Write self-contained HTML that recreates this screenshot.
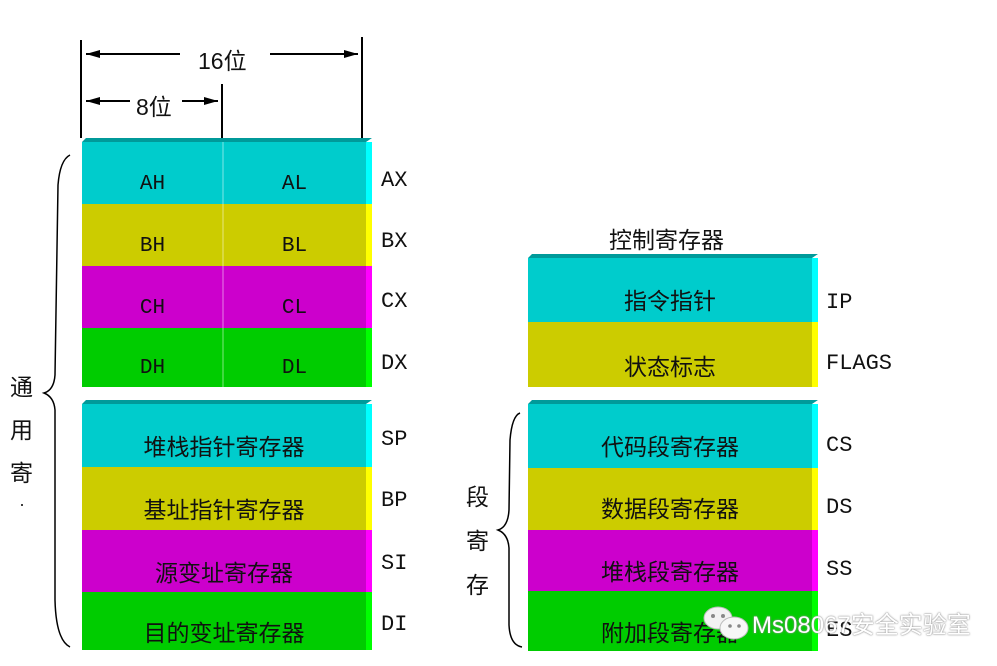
<!DOCTYPE html>
<html><head><meta charset="utf-8"><style>
body{margin:0;width:997px;height:665px;background:#fff;position:relative;overflow:hidden;font-family:"Liberation Sans","Noto Sans CJK SC",sans-serif}
.a{position:absolute}
.r{position:absolute;display:flex;align-items:center;justify-content:center;font-size:23px;color:#111}
.m{font-family:"Liberation Mono","Noto Sans CJK SC",monospace;font-size:21px}
.lab{position:absolute;font-family:"Liberation Mono",monospace;font-size:22px;color:#111}
.cn{position:absolute;font-size:23px;color:#111}
</style></head><body>
<svg class="a" style="left:0;top:0" width="997" height="665">
<g stroke="#000" stroke-width="2" fill="none">
<line x1="81" y1="40" x2="81" y2="138"/>
<line x1="362" y1="37" x2="362" y2="138"/>
<line x1="222" y1="84" x2="222" y2="140"/>
<line x1="86" y1="54" x2="180" y2="54"/><line x1="270" y1="54" x2="358" y2="54"/>
<line x1="86" y1="101" x2="130" y2="101"/><line x1="182" y1="101" x2="218" y2="101"/>
<path d="M70 155 Q60 160 58 185 L55 375 Q54 390 44 393 Q54 397 55 410 L55 600 Q56 640 70 647" stroke-width="1.5"/>
<path d="M520 413 Q512 416 510 440 L509 510 Q508 527 498 530 Q508 534 509 548 L509 625 Q510 645 522 647" stroke-width="1.5"/>
</g>
<g fill="#000"><polygon points="86,54 100,50 100,58"/><polygon points="358,54 344,50 344,58"/>
<polygon points="86,101 100,97 100,105"/><polygon points="218,101 204,97 204,105"/></g>
<polygon points="82,142 86,138 372,138 366,142" fill="#009a9a"/>
<rect x="82" y="142" width="284" height="62" fill="#00cccc"/><rect x="366" y="142" width="6" height="62" fill="#00ffff"/>
<rect x="82" y="204" width="284" height="62" fill="#cccc00"/><rect x="366" y="204" width="6" height="62" fill="#ffff00"/>
<rect x="82" y="266" width="284" height="62" fill="#cc00cc"/><rect x="366" y="266" width="6" height="62" fill="#ff00ff"/>
<rect x="82" y="328" width="284" height="59" fill="#00cc00"/><rect x="366" y="328" width="6" height="59" fill="#00ff00"/>
<line x1="223" y1="142" x2="223" y2="387" stroke="#ffffff" stroke-opacity=".5" stroke-width="1"/>
<polygon points="82,404 86,400 372,400 366,404" fill="#009a9a"/>
<rect x="82" y="404" width="284" height="63" fill="#00cccc"/><rect x="366" y="404" width="6" height="63" fill="#00ffff"/>
<rect x="82" y="467" width="284" height="63" fill="#cccc00"/><rect x="366" y="467" width="6" height="63" fill="#ffff00"/>
<rect x="82" y="530" width="284" height="62" fill="#cc00cc"/><rect x="366" y="530" width="6" height="62" fill="#ff00ff"/>
<rect x="82" y="592" width="284" height="58" fill="#00cc00"/><rect x="366" y="592" width="6" height="58" fill="#00ff00"/>
<polygon points="528,258 532,254 818,254 812,258" fill="#009a9a"/>
<rect x="528" y="258" width="284" height="64" fill="#00cccc"/><rect x="812" y="258" width="6" height="64" fill="#00ffff"/>
<rect x="528" y="322" width="284" height="65" fill="#cccc00"/><rect x="812" y="322" width="6" height="65" fill="#ffff00"/>
<polygon points="528,404 532,400 818,400 812,404" fill="#009a9a"/>
<rect x="528" y="404" width="284" height="64" fill="#00cccc"/><rect x="812" y="404" width="6" height="64" fill="#00ffff"/>
<rect x="528" y="468" width="284" height="62" fill="#cccc00"/><rect x="812" y="468" width="6" height="62" fill="#ffff00"/>
<rect x="528" y="530" width="284" height="61" fill="#cc00cc"/><rect x="812" y="530" width="6" height="61" fill="#ff00ff"/>
<rect x="528" y="591" width="284" height="60" fill="#00cc00"/><rect x="812" y="591" width="6" height="60" fill="#00ff00"/>
<circle cx="22" cy="505" r="1" fill="#000"/>
</svg>
<div class="cn" style="left:198px;top:42px;font-size:23px">16位</div>
<div class="cn" style="left:136px;top:88px;font-size:23px">8位</div>

<div class="r m" style="left:82px;top:142px;width:141px;height:84px">AH</div>
<div class="r m" style="left:223px;top:142px;width:143px;height:84px">AL</div>
<div class="r m" style="left:82px;top:204px;width:141px;height:84px">BH</div>
<div class="r m" style="left:223px;top:204px;width:143px;height:84px">BL</div>
<div class="r m" style="left:82px;top:266px;width:141px;height:84px">CH</div>
<div class="r m" style="left:223px;top:266px;width:143px;height:84px">CL</div>
<div class="r m" style="left:82px;top:328px;width:141px;height:80px">DH</div>
<div class="r m" style="left:223px;top:328px;width:143px;height:80px">DL</div>

<div class="r" style="left:82px;top:410px;width:284px;height:70px">堆栈指针寄存器</div>
<div class="r" style="left:82px;top:473px;width:284px;height:70px">基址指针寄存器</div>
<div class="r" style="left:82px;top:536px;width:284px;height:70px">源变址寄存器</div>
<div class="r" style="left:82px;top:596px;width:284px;height:70px">目的变址寄存器</div>

<div class="lab" style="left:381px;top:168px">AX</div>
<div class="lab" style="left:381px;top:229px">BX</div>
<div class="lab" style="left:381px;top:289px">CX</div>
<div class="lab" style="left:381px;top:351px">DX</div>
<div class="lab" style="left:381px;top:427px">SP</div>
<div class="lab" style="left:381px;top:488px">BP</div>
<div class="lab" style="left:381px;top:551px">SI</div>
<div class="lab" style="left:381px;top:612px">DI</div>

<div class="cn" style="left:609px;top:221px">控制寄存器</div>
<div class="r" style="left:528px;top:264px;width:284px;height:70px">指令指针</div>
<div class="r" style="left:528px;top:330px;width:284px;height:70px">状态标志</div>
<div class="r" style="left:528px;top:410px;width:284px;height:70px">代码段寄存器</div>
<div class="r" style="left:528px;top:472px;width:284px;height:70px">数据段寄存器</div>
<div class="r" style="left:528px;top:535px;width:284px;height:70px">堆栈段寄存器</div>
<div class="r" style="left:528px;top:596px;width:284px;height:70px">附加段寄存器</div>

<div class="lab" style="left:826px;top:290px">IP</div>
<div class="lab" style="left:826px;top:351px">FLAGS</div>
<div class="lab" style="left:826px;top:433px">CS</div>
<div class="lab" style="left:826px;top:495px">DS</div>
<div class="lab" style="left:826px;top:557px">SS</div>
<div class="lab" style="left:826px;top:618px">ES</div>

<div class="cn" style="left:10px;top:366px;line-height:43px;width:24px">通<br>用<br>寄</div>
<div class="cn" style="left:466px;top:475px;line-height:44px;width:24px">段<br>寄<br>存</div>

<svg class="a" style="left:702px;top:604px" width="60" height="40">
<ellipse cx="16" cy="14" rx="14" ry="11" fill="#f2f2f2" stroke="#bbb"/>
<ellipse cx="32" cy="24" rx="14" ry="11" fill="#f7f7f7" stroke="#bbb"/>
<circle cx="11" cy="12" r="2" fill="#888"/><circle cx="21" cy="12" r="2" fill="#888"/>
<circle cx="28" cy="22" r="1.8" fill="#888"/><circle cx="37" cy="22" r="1.8" fill="#888"/>
</svg>
<div class="a" style="left:752px;top:605px;font-size:24px;color:#fff;text-shadow:0 0 2px #999,0 0 1px #777">Ms08067安全实验室</div>
</body></html>
